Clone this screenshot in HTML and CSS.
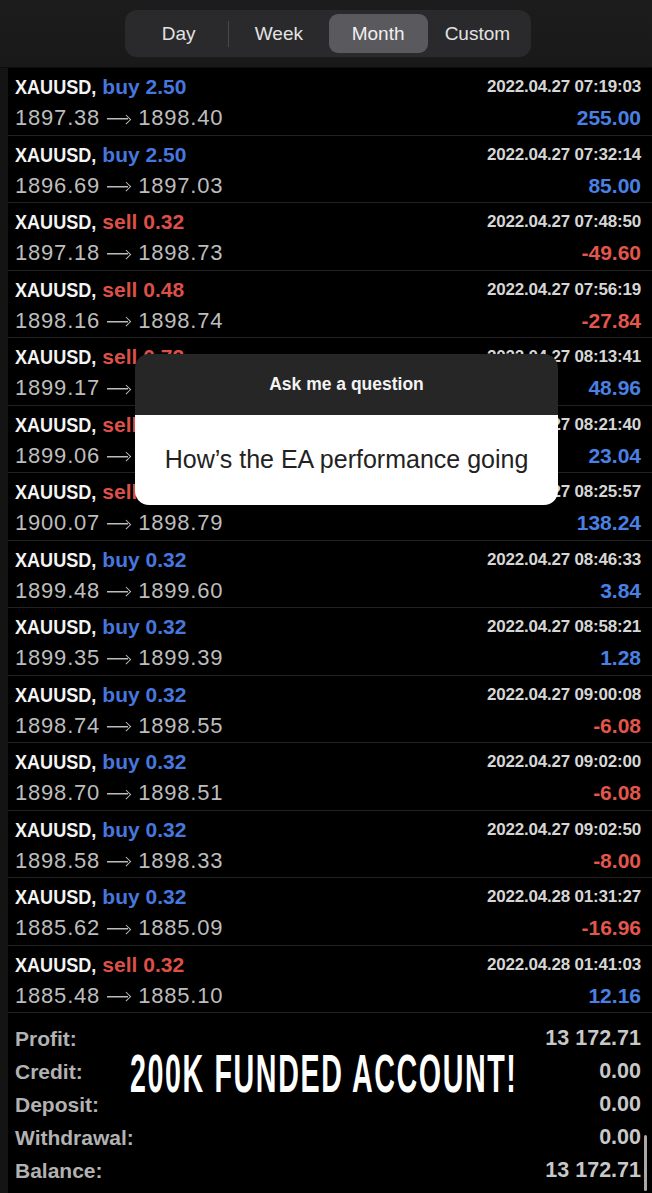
FILE: index.html
```html
<!DOCTYPE html>
<html>
<head>
<meta charset="utf-8">
<link rel="stylesheet" href="styles.css">
</head>
<body>
<div class="screen">
  <header class="topbar">
    <div class="seg">
      <div class="seg-item">Day</div>
      <div class="seg-sep"></div>
      <div class="seg-item">Week</div>
      <div class="seg-item active">Month</div>
      <div class="seg-item">Custom</div>
    </div>
  </header>

  <main class="list">
    <div class="row"><div class="l1"><span class="sym">XAUUSD,</span> <span class="buy">buy 2.50</span></div><div class="date">2022.04.27 07:19:03</div><div class="px">1897.38 <span class="arr"></span> 1898.40</div><div class="amt pos">255.00</div></div>
    <div class="row"><div class="l1"><span class="sym">XAUUSD,</span> <span class="buy">buy 2.50</span></div><div class="date">2022.04.27 07:32:14</div><div class="px">1896.69 <span class="arr"></span> 1897.03</div><div class="amt pos">85.00</div></div>
    <div class="row"><div class="l1"><span class="sym">XAUUSD,</span> <span class="sell">sell 0.32</span></div><div class="date">2022.04.27 07:48:50</div><div class="px">1897.18 <span class="arr"></span> 1898.73</div><div class="amt neg">-49.60</div></div>
    <div class="row"><div class="l1"><span class="sym">XAUUSD,</span> <span class="sell">sell 0.48</span></div><div class="date">2022.04.27 07:56:19</div><div class="px">1898.16 <span class="arr"></span> 1898.74</div><div class="amt neg">-27.84</div></div>
    <div class="row"><div class="l1"><span class="sym">XAUUSD,</span> <span class="sell">sell 0.72</span></div><div class="date">2022.04.27 08:13:41</div><div class="px">1899.17 <span class="arr"></span> 1899.94</div><div class="amt pos">48.96</div></div>
    <div class="row"><div class="l1"><span class="sym">XAUUSD,</span> <span class="sell">sell 0.72</span></div><div class="date">2022.04.27 08:21:40</div><div class="px">1899.06 <span class="arr"></span> 1898.74</div><div class="amt pos">23.04</div></div>
    <div class="row"><div class="l1"><span class="sym">XAUUSD,</span> <span class="sell">sell 1.08</span></div><div class="date">2022.04.27 08:25:57</div><div class="px">1900.07 <span class="arr"></span> 1898.79</div><div class="amt pos">138.24</div></div>
    <div class="row"><div class="l1"><span class="sym">XAUUSD,</span> <span class="buy">buy 0.32</span></div><div class="date">2022.04.27 08:46:33</div><div class="px">1899.48 <span class="arr"></span> 1899.60</div><div class="amt pos">3.84</div></div>
    <div class="row"><div class="l1"><span class="sym">XAUUSD,</span> <span class="buy">buy 0.32</span></div><div class="date">2022.04.27 08:58:21</div><div class="px">1899.35 <span class="arr"></span> 1899.39</div><div class="amt pos">1.28</div></div>
    <div class="row"><div class="l1"><span class="sym">XAUUSD,</span> <span class="buy">buy 0.32</span></div><div class="date">2022.04.27 09:00:08</div><div class="px">1898.74 <span class="arr"></span> 1898.55</div><div class="amt neg">-6.08</div></div>
    <div class="row"><div class="l1"><span class="sym">XAUUSD,</span> <span class="buy">buy 0.32</span></div><div class="date">2022.04.27 09:02:00</div><div class="px">1898.70 <span class="arr"></span> 1898.51</div><div class="amt neg">-6.08</div></div>
    <div class="row"><div class="l1"><span class="sym">XAUUSD,</span> <span class="buy">buy 0.32</span></div><div class="date">2022.04.27 09:02:50</div><div class="px">1898.58 <span class="arr"></span> 1898.33</div><div class="amt neg">-8.00</div></div>
    <div class="row"><div class="l1"><span class="sym">XAUUSD,</span> <span class="buy">buy 0.32</span></div><div class="date">2022.04.28 01:31:27</div><div class="px">1885.62 <span class="arr"></span> 1885.09</div><div class="amt neg">-16.96</div></div>
    <div class="row"><div class="l1"><span class="sym">XAUUSD,</span> <span class="sell">sell 0.32</span></div><div class="date">2022.04.28 01:41:03</div><div class="px">1885.48 <span class="arr"></span> 1885.10</div><div class="amt pos">12.16</div></div>

    <div class="popup">
      <div class="popup-head">Ask me a question</div>
      <div class="popup-body">How’s the EA performance going</div>
    </div>
  </main>

  <section class="summary">
    <div class="srow"><span class="lbl">Profit:</span><span class="val">13 172.71</span></div>
    <div class="srow"><span class="lbl">Credit:</span><span class="val">0.00</span></div>
    <div class="srow"><span class="lbl">Deposit:</span><span class="val">0.00</span></div>
    <div class="srow"><span class="lbl">Withdrawal:</span><span class="val">0.00</span></div>
    <div class="srow"><span class="lbl">Balance:</span><span class="val">13 172.71</span></div>
    <div class="caption">200K FUNDED ACCOUNT!</div>
    <div class="scrollbar"></div>
  </section>
</div>
</body>
</html>
```

FILE: styles.css
```css
* { box-sizing: border-box; }
html, body { margin: 0; padding: 0; }
body {
  background: #121212;
  width: 652px;
  height: 1193px;
  overflow: hidden;
  font-family: "Liberation Sans", Arial, sans-serif;
}
.screen {
  width: 652px;
  height: 1193px;
  display: flex;
  flex-direction: column;
  padding-left: 8px;
  background: #141414;
}
.topbar {
  height: 68px;
  margin-left: -8px;
  background: linear-gradient(#1c1c1c, #191919);
  display: flex;
  justify-content: center;
  padding-top: 10px;
  border-bottom: 1px solid #0c0c0c;
}
.seg {
  width: 406px;
  height: 47px;
  margin-left: 4px;
  background: #2a2a2c;
  border-radius: 12px;
  display: flex;
  align-items: center;
  padding: 0 4px;
}
.seg-item {
  flex: 1;
  height: 39px;
  display: flex;
  align-items: center;
  justify-content: center;
  color: #e2e2e2;
  font-size: 19px;
  border-radius: 9px;
}
.seg-sep {
  width: 1px;
  height: 26px;
  background: #48484a;
}
.seg-item.active {
  background: #5a5a5e;
  color: #f0f0f0;
}
.list {
  position: relative;
  background: #000;
  display: flex;
  flex-direction: column;
}
.row {
  height: 67.5px;
  display: grid;
  grid-template-columns: 1fr auto;
  grid-template-rows: 26px 36px;
  padding: 6px 11px 0 7px;
  border-bottom: 1px solid #222;
  align-items: center;
}
.l1 {
  font-size: 21px;
  font-weight: bold;
  line-height: 26px;
  white-space: nowrap;
}
.sym {
  display: inline-block;
  color: #f4f4f4;
  transform: scaleX(0.86);
  transform-origin: left center;
  margin-right: -13px;
}
.buy { color: #4677de; }
.sell { color: #dd5048; }
.date {
  font-size: 17px;
  font-weight: bold;
  color: #d6d6d6;
  text-align: right;
  letter-spacing: -0.2px;
}
.px {
  font-size: 22px;
  color: #bdbdbd;
  line-height: 36px;
  letter-spacing: 0.8px;
  display: flex;
  align-items: center;
  gap: 7px;
  white-space: nowrap;
}
.arr {
  display: inline-block;
  flex: none;
  width: 23px;
  height: 10px;
  margin-top: 2px;
  margin-right: 1px;
  position: relative;
  background: linear-gradient(#bdbdbd, #bdbdbd) left center / 21px 1.5px no-repeat;
}
.arr::after {
  content: "";
  position: absolute;
  right: 1px;
  top: 1.8px;
  width: 5.5px;
  height: 5.5px;
  border-top: 1.5px solid #bdbdbd;
  border-right: 1.5px solid #bdbdbd;
  transform: rotate(45deg);
}
.amt {
  font-size: 21px;
  font-weight: bold;
  text-align: right;
  line-height: 36px;
}
.amt.pos { color: #4a80e4; }
.amt.neg { color: #e2564c; }

.popup {
  position: absolute;
  left: 127px;
  top: 286px;
  width: 423px;
  height: 151px;
  border-radius: 14px;
  overflow: hidden;
  display: flex;
  flex-direction: column;
}
.popup-head {
  height: 61px;
  background: #262626;
  color: #f4f4f4;
  font-size: 17.5px;
  font-weight: bold;
  display: flex;
  align-items: center;
  justify-content: center;
}
.popup-body {
  flex: 1;
  background: #fff;
  color: #222;
  font-size: 25px;
  display: flex;
  align-items: center;
  justify-content: center;
  padding-bottom: 2px;
}

.summary {
  position: relative;
  flex: 1;
  background: #000;
  padding: 9px 11px 0 7px;
  display: flex;
  flex-direction: column;
}
.srow {
  height: 33px;
  display: flex;
  justify-content: space-between;
  align-items: center;
}
.lbl {
  font-size: 21px;
  font-weight: bold;
  color: #b2b2b2;
}
.val {
  font-size: 21.5px;
  color: #c8c8c8;
  font-weight: bold;
}
.caption {
  position: absolute;
  left: 122px;
  top: 34px;
  color: #fff;
  font-size: 53px;
  line-height: 53px;
  font-weight: bold;
  letter-spacing: 3px;
  white-space: nowrap;
  transform: scaleX(0.54);
  transform-origin: left center;
}
.scrollbar {
  position: absolute;
  right: 5px;
  top: 122px;
  width: 3px;
  height: 56px;
  border-radius: 2px;
  background: #a8a8a8;
}
```
